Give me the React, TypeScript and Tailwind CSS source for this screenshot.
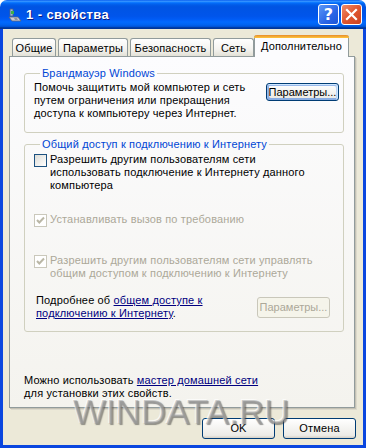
import React from "react";

function Tab({ w, ml, children }: { w: string; ml: string; children: React.ReactNode }) {
  return (
    <div
      className={`${w} ${ml} h-[18px] rounded-t-[3px] border border-b-0 border-[#919b9c] bg-[linear-gradient(to_bottom,#ffffff,#f4f3ef_60%,#e3e1d7)] flex items-center justify-center whitespace-nowrap pt-[1px]`}
    >
      {children}
    </div>
  );
}

function CheckEmpty() {
  return (
    <div className="w-[13px] h-[13px] shrink-0 mt-[1px] border border-[#1c5180] bg-[linear-gradient(135deg,#dcdcd7,#ffffff)]" />
  );
}

function CheckDisabled() {
  return (
    <div className="w-[13px] h-[13px] shrink-0 mt-[1px] border border-[#cac8bb] bg-white flex items-center justify-center">
      <svg width="11" height="11" viewBox="0 0 11 11">
        <path d="M2 5 L4.3 7.5 L9 2.5" fill="none" stroke="#bab7a6" strokeWidth="2" />
      </svg>
    </div>
  );
}

export default function App() {
  return (
    <div className="relative w-[366px] h-[448px] overflow-hidden bg-white flex flex-col font-['Liberation_Sans',Arial,sans-serif] text-[11px] leading-[13px] tracking-[0.15px] text-black">
      {/* Title bar */}
      <div className="h-[29px] shrink-0 rounded-t-[7px] flex items-center bg-[linear-gradient(to_bottom,#0058ee_0%,#3a93ff_4%,#288eff_6%,#127dff_8%,#036ffc_10%,#0262ee_14%,#0057e5_20%,#0054e3_24%,#0055eb_56%,#005bf5_66%,#026afe_76%,#0062ef_86%,#0052d6_92%,#0040ab_94%,#003092_100%)]">
        <div className="ml-[7px] w-[16px] h-[16px] shrink-0">
          <svg width="16" height="16" viewBox="0 0 16 16">
            <path d="M3 2 L6 2 L6 9 L3 9 Z" fill="#9fb6d8" stroke="#4a5f86" strokeWidth="0.8" />
            <path d="M2 10 L11 10 L14 14 L5 14 Z" fill="#c9c9d4" stroke="#5e6478" strokeWidth="0.8" />
            <rect x="4" y="4" width="3" height="3" fill="#3fb04a" />
            <path d="M7 11 L10 11 L11 13 L8 13 Z" fill="#8a8fa5" />
          </svg>
        </div>
        <span className="ml-[3px] text-white font-bold text-[13px] leading-[16px] tracking-[0.4px] [text-shadow:1px_1px_0_#0a1883] whitespace-nowrap">
          1 - свойства
        </span>
        <div className="flex-1" />
        <div className="w-[21px] h-[21px] rounded-[3px] border border-white bg-[linear-gradient(135deg,#5a97f7,#2a65e6_60%,#1c55d8)] flex items-center justify-center text-white font-bold text-[16px] leading-none font-['DejaVu_Sans',sans-serif]">
          ?
        </div>
        <div className="ml-[2px] mr-[4px] w-[21px] h-[21px] rounded-[3px] border border-white bg-[linear-gradient(135deg,#f08c6a,#e0562f_50%,#cc4220)] flex items-center justify-center">
          <svg width="13" height="13" viewBox="0 0 13 13">
            <path d="M2 2 L11 11 M11 2 L2 11" stroke="white" strokeWidth="2.2" strokeLinecap="square" />
          </svg>
        </div>
      </div>

      {/* Body */}
      <div className="flex-1 flex flex-col bg-[#ece9d8] border-x-[3px] border-b-[3px] border-[#0a46df] pl-[6px] pt-[6px]">
        {/* Tabs */}
        <div className="flex items-end h-[21px] w-[346px]">
          <Tab w="w-[44px]" ml="ml-[3px]">Общие</Tab>
          <Tab w="w-[70px]" ml="ml-[2px]">Параметры</Tab>
          <Tab w="w-[81px]" ml="ml-[2px]">Безопасность</Tab>
          <Tab w="w-[41px]" ml="ml-[2px]">Сеть</Tab>
          <div className="relative z-10 -mb-px w-[95px] h-[22px] rounded-t-[3px] border-x border-[#919b9c] bg-[#fcfcfe] flex flex-col">
            <div className="h-[3px] -mx-px rounded-t-[3px] bg-[linear-gradient(to_bottom,#e68b2c,#ffc73c)]" />
            <div className="flex-1 flex items-center justify-center whitespace-nowrap pb-[2px]">Дополнительно</div>
          </div>
        </div>

        {/* Panel */}
        <div className="w-[346px] h-[352px] border border-[#919b9c] bg-[linear-gradient(to_bottom,#fcfcfe,#f4f3ee)] shadow-[1px_1px_0_#c4c1b4,2px_2px_0_#dcd9cc] flex flex-col pl-[14px]">
          {/* Group 1 */}
          <fieldset className="mt-[10px] w-[320px] border border-[#d0d0bf] rounded-[3px] pl-[9px] pr-[4px] pb-[12px]">
            <legend className="ml-[6px] px-[2px] text-[#0046d5]">Брандмауэр Windows</legend>
            <div className="flex justify-between items-start pt-[1px]">
              <p className="whitespace-nowrap">
                Помочь защитить мой компьютер и сеть
                <br />
                путем ограничения или прекращения
                <br />
                доступа к компьютеру через Интернет.
              </p>
              <button className="mt-[2px] w-[73px] h-[18px] rounded-[3px] border border-[#003c74] bg-[linear-gradient(to_bottom,#ffffff,#ecebe6_86%,#d6d0c5)] shadow-[inset_-1px_1px_#cee7ff,inset_1px_2px_#98b8ea,inset_-2px_2px_#bcd4f6,inset_1px_-1px_#89ade4,inset_2px_-2px_#89ade4] flex items-center justify-center whitespace-nowrap tracking-normal">
                Параметры...
              </button>
            </div>
          </fieldset>

          {/* Group 2 */}
          <fieldset className="mt-[5px] w-[320px] border border-[#d0d0bf] rounded-[3px] pl-[9px] pb-[11px]">
            <legend className="ml-[6px] px-[2px] text-[#0046d5]">Общий доступ к подключению к Интернету</legend>
            <div className="flex items-start gap-[3px] pt-[2px]">
              <CheckEmpty />
              <p className="whitespace-nowrap">
                Разрешить другим пользователям сети
                <br />
                использовать подключение к Интернету данного
                <br />
                компьютера
              </p>
            </div>
            <div className="flex items-start gap-[3px] mt-[21px] text-[#aca899]">
              <CheckDisabled />
              <p className="whitespace-nowrap">Устанавливать вызов по требованию</p>
            </div>
            <div className="flex items-start gap-[3px] mt-[27px] text-[#aca899]">
              <CheckDisabled />
              <p className="whitespace-nowrap">
                Разрешить другим пользователям сети управлять
                <br />
                общим доступом к подключению к Интернету
              </p>
            </div>
            <div className="flex items-start justify-between mt-[14px] pl-[2px]">
              <p className="whitespace-nowrap">
                Подробнее об{" "}
                <span className="text-[#000080] underline">
                  общем доступе к
                  <br />
                  подключению к Интернету
                </span>
                .
              </p>
              <button className="mt-[3px] mr-[13px] w-[73px] h-[21px] rounded-[3px] border border-[#c9c7ba] bg-[#f5f4ea] text-[#aca899] flex items-center justify-center whitespace-nowrap tracking-normal">
                Параметры...
              </button>
            </div>
          </fieldset>

          <p className="mt-[42px] whitespace-nowrap">
            Можно использовать <span className="text-[#000080] underline">мастер домашней сети</span>
            <br />
            для установки этих свойств.
          </p>
        </div>

        {/* Buttons */}
        <div className="flex justify-end gap-[8px] pr-[7px] mt-[10px]">
          <button className="w-[73px] h-[21px] rounded-[3px] border border-[#003c74] bg-[linear-gradient(to_bottom,#ffffff,#ecebe6_86%,#d6d0c5)] flex items-center justify-center">
            OK
          </button>
          <button className="w-[73px] h-[21px] rounded-[3px] border border-[#003c74] bg-[linear-gradient(to_bottom,#ffffff,#ecebe6_86%,#d6d0c5)] flex items-center justify-center">
            Отмена
          </button>
        </div>
      </div>

      {/* Watermark */}
      <div className="absolute left-[73px] top-[394px] text-[35px] leading-[35px] tracking-normal text-[rgba(160,160,160,0.5)] [text-shadow:1px_1px_1px_rgba(50,50,50,0.5),-1px_-1px_0_rgba(255,255,255,0.7)] pointer-events-none whitespace-nowrap">
        WINDATA.RU
      </div>
    </div>
  );
}
